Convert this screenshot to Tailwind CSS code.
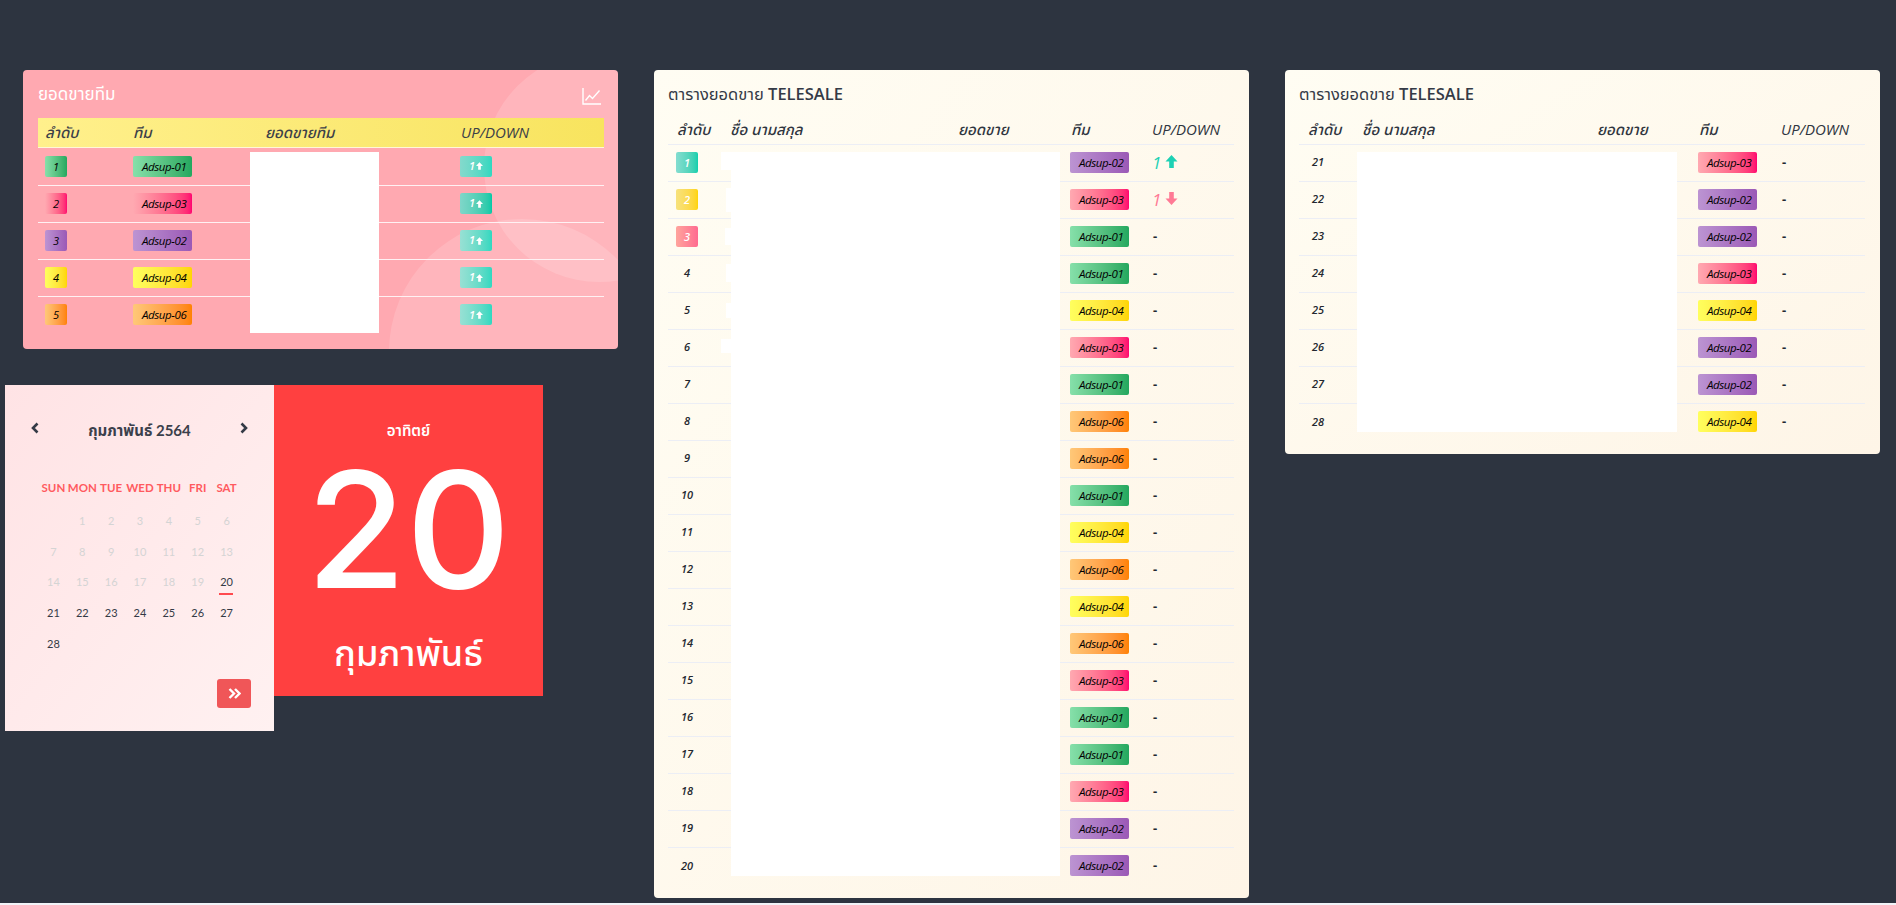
<!DOCTYPE html>
<html lang="en">

<head>
    <meta charset="UTF-8">
    <meta name="viewport" content="width=device-width, initial-scale=1.0">
    <title>Adsup Dashboard</title>
    <script src="https://cdn.jsdelivr.net/npm/@tailwindcss/browser@4"></script>
</head>

<body class="bg-[#f1f3f8] font-['Open_Sans','Noto_Sans','Noto_Sans_Thai',sans-serif] overflow-hidden">

    <div class="h-[903px] bg-[#2d3440] pt-[70px] flex items-start overflow-hidden">

        <!-- Left column -->
        <div class="w-[618px] shrink-0">

            <!-- Team sales -->
            <div class="relative overflow-hidden ml-[23px] w-[595px] h-[279px] rounded-[4px] bg-[#ffa9b1] px-[15px]">
                <div class="absolute left-[461px] top-[-18px] w-[230px] h-[230px] rounded-full bg-white/15"></div>
                <div class="absolute left-[366px] top-[149px] w-[266px] h-[266px] rounded-full bg-white/15"></div>
                <div class="relative flex justify-between items-center h-[48px] pr-[2px]">
                    <h2 class="text-[17px] text-white">ยอดขายทีม</h2>
                    <svg class="w-[19px] h-[17px] mt-[4px]" viewBox="0 0 19 17" fill="none" stroke="white" stroke-width="1.4">
                        <path d="M1 0v16h18" />
                        <path d="M3.5 12.5l4-5 3 3 7-8" />
                    </svg>
                </div>
                <table class="relative table-fixed w-[566px]">
                    <colgroup>
                        <col class="w-[88px]"><col class="w-[133px]"><col class="w-[194px]"><col class="w-[151px]">
                    </colgroup>
                    <thead>
                        <tr class="h-[29px] bg-gradient-to-r from-[#fff08c] to-[#f8e45e] border-b border-[#fff7d8] text-[15px] italic text-[#3c4048] text-left">
                            <th class="font-medium pl-[7px]">ลำดับ</th>
                            <th class="font-medium pl-[7px]">ทีม</th>
                            <th class="font-medium pl-[6px]">ยอดขายทีม</th>
                            <th class="font-medium pl-[8px]">UP/DOWN</th>
                        </tr>
                    </thead>
                    <tbody id="teamRows"></tbody>
                </table>
                <div class="absolute left-[227px] top-[82px] w-[129px] h-[181px] bg-white"></div>
            </div>

            <!-- Calendar -->
            <div class="flex items-start ml-[5px] mt-[36px]">
                <div class="w-[269px] h-[346px] bg-gradient-to-br from-[#ffe3e5] to-[#fff1f1] pt-[36px]">
                    <div class="flex items-center justify-between h-[18px] pl-[26px] pr-[26px]">
                        <svg class="w-[8px] h-[12px] -mt-[4px]" viewBox="0 0 8 12" fill="none" stroke="#343a46" stroke-width="2.6"><path d="M6.5 1.5L2 6l4.5 4.5" /></svg>
                        <span class="font-['Lato','Noto_Sans_Thai',sans-serif] text-[15px] font-bold text-[#3b404b]">กุมภาพันธ์ 2564</span>
                        <svg class="w-[8px] h-[12px] -mt-[4px]" viewBox="0 0 8 12" fill="none" stroke="#343a46" stroke-width="2.6"><path d="M1.5 1.5L6 6l-4.5 4.5" /></svg>
                    </div>
                    <div class="grid grid-cols-7 w-[202px] ml-[34px] mt-[40px] h-[16px] items-center text-center font-['Lato',sans-serif] text-[11.5px] font-bold text-[#ff5a5f]">
                        <span>SUN</span><span>MON</span><span>TUE</span><span>WED</span><span>THU</span><span>FRI</span><span>SAT</span>
                    </div>
                    <div id="days" class="grid grid-cols-7 auto-rows-[30.7px] w-[202px] ml-[34px] mt-[11px] items-center text-center font-['Lato',sans-serif] text-[11px]"></div>
                    <div class="flex justify-end mt-[20px] mr-[23px]">
                        <button class="w-[34px] h-[29px] rounded-[3px] bg-[#f05658] flex items-center justify-center">
                            <svg class="w-[13px] h-[11px]" viewBox="0 0 13 11" fill="none" stroke="white" stroke-width="2.4"><path d="M1.5 1l4.5 4.5L1.5 10" /><path d="M7 1l4.5 4.5L7 10" /></svg>
                        </button>
                    </div>
                </div>
                <div class="w-[269px] h-[311px] bg-[#ff4040] pt-[36px] flex flex-col items-center text-white">
                    <div class="h-[18px] leading-[18px] text-[15px] font-semibold">อาทิตย์</div>
                    <div class="mt-[10px] h-[160px] leading-[160px] text-[162px] font-medium font-['Inter',sans-serif]">20</div>
                    <div class="mt-[24px] h-[40px] leading-[40px] text-[36px] font-medium">กุมภาพันธ์</div>
                </div>
            </div>
        </div>

        <!-- Telesale ranking 1-20 -->
        <div class="relative shrink-0 ml-[36px] w-[595px] rounded-[4px] bg-gradient-to-br from-[#fffdf3] to-[#fef5e7] pt-[15px] px-[14px] pb-[14px]">
            <h2 class="h-[20px] leading-[18px] text-[16.5px] text-[#343a46]">ตารางยอดขาย <span class="font-semibold">TELESALE</span></h2>
            <table class="table-fixed w-[566px] mt-[9px]">
                <colgroup>
                    <col class="w-[55px]"><col class="w-[229px]"><col class="w-[110px]"><col class="w-[82px]"><col class="w-[90px]">
                </colgroup>
                <thead>
                    <tr class="h-[30px] text-[15px] italic text-[#2f3540] text-left">
                        <th class="font-medium pl-[9px]">ลำดับ</th>
                        <th class="font-medium pl-[7px]">ชื่อ นามสกุล</th>
                        <th class="font-medium pl-[6px]">ยอดขาย</th>
                        <th class="font-medium pl-[9px]">ทีม</th>
                        <th class="font-medium pl-[8px]">UP/DOWN</th>
                    </tr>
                </thead>
                <tbody id="saleRowsA"></tbody>
            </table>
            <!-- blanked out names -->
            <div class="absolute left-[77px] top-[82px] w-[329px] h-[724px] bg-white"></div>
            <div class="absolute left-[67px] top-[82px] w-[10px] h-[18px] bg-white"></div>
            <div class="absolute left-[72px] top-[118px] w-[5px] h-[24px] bg-white"></div>
            <div class="absolute left-[71px] top-[158px] w-[6px] h-[17px] bg-white"></div>
            <div class="absolute left-[72px] top-[194px] w-[5px] h-[18px] bg-white"></div>
            <div class="absolute left-[72px] top-[233px] w-[5px] h-[15px] bg-white"></div>
            <div class="absolute left-[67px] top-[269px] w-[10px] h-[14px] bg-white"></div>
        </div>

        <!-- Telesale ranking 21-28 -->
        <div class="relative shrink-0 ml-[36px] w-[595px] rounded-[4px] bg-gradient-to-br from-[#fffdf3] to-[#fef5e7] pt-[15px] px-[14px] pb-[14px]">
            <h2 class="h-[20px] leading-[18px] text-[16.5px] text-[#343a46]">ตารางยอดขาย <span class="font-semibold">TELESALE</span></h2>
            <table class="table-fixed w-[566px] mt-[9px]">
                <colgroup>
                    <col class="w-[56px]"><col class="w-[235px]"><col class="w-[100px]"><col class="w-[83px]"><col class="w-[92px]">
                </colgroup>
                <thead>
                    <tr class="h-[30px] text-[15px] italic text-[#2f3540] text-left">
                        <th class="font-medium pl-[9px]">ลำดับ</th>
                        <th class="font-medium pl-[7px]">ชื่อ นามสกุล</th>
                        <th class="font-medium pl-[7px]">ยอดขาย</th>
                        <th class="font-medium pl-[9px]">ทีม</th>
                        <th class="font-medium pl-[8px]">UP/DOWN</th>
                    </tr>
                </thead>
                <tbody id="saleRowsB"></tbody>
            </table>
            <div class="absolute left-[72px] top-[82px] w-[320px] h-[280px] bg-white"></div>
        </div>
    </div>

    <script>
        const teamBadge = {
            '01': 'from-[#86e0aa] to-[#22a85f]',
            '02': 'from-[#bc94d2] to-[#9b59b6]',
            '03': 'from-[#ffa9b1] to-[#ff0070]',
            '04': 'from-[#ffff5e] to-[#ffd600]',
            '06': 'from-[#ffc878] to-[#ff8200]'
        };
        const topBadge = {
            1: 'from-[#84ddd0] to-[#0ccfae]',
            2: 'from-[#f7e27c] to-[#ffd400]',
            3: 'from-[#ffa49c] to-[#ff6a90]'
        };
        const arrowUp = '<svg class="w-[13px] h-[13px] ml-[4px] -mt-[2px]" viewBox="0 0 12 13" fill="#1dd1b4"><path d="M6 0l6 6.5H8.3V13H3.7V6.5H0z"/></svg>';
        const arrowDown = '<svg class="w-[13px] h-[13px] ml-[4px] -mt-[2px]" viewBox="0 0 12 13" fill="#ff7a95"><path d="M6 13L0 6.5h3.7V0h4.6v6.5H12z"/></svg>';

        function badge(team) {
            return `<span class="block w-[59px] h-[21px] leading-[21px] rounded-[2px] pl-[9px] text-[11.5px] italic font-medium tracking-[-0.4px] text-black bg-gradient-to-r ${teamBadge[team]}">Adsup-${team}</span>`;
        }

        function saleRow(rank, team) {
            let rankCell = `<span class="block w-[22px] text-center text-[11px] italic font-semibold text-[#23272f]">${rank}</span>`;
            if (topBadge[rank]) {
                rankCell = `<span class="block w-[22px] h-[21px] leading-[21px] rounded-[2px] text-center text-[11px] italic font-semibold text-white bg-gradient-to-r ${topBadge[rank]}">${rank}</span>`;
            }
            let move = '<span class="font-bold text-[#23272f] pl-[1px]">-</span>';
            if (rank === 1) move = `<span class="flex items-center"><span class="italic text-[17px] leading-[20px] text-[#1dd1b4]">1</span>${arrowUp}</span>`;
            if (rank === 2) move = `<span class="flex items-center"><span class="italic text-[17px] leading-[20px] text-[#ff7a95]">1</span>${arrowDown}</span>`;
            return `<tr class="h-[37px] border-t border-[#eceef5]">
                <td class="pl-[8px]">${rankCell}</td><td></td><td></td>
                <td class="pl-[8px]">${badge(team)}</td>
                <td class="pl-[8px] text-[13px]">${move}</td>
            </tr>`;
        }

        const teamsA = ['02','03','01','01','04','03','01','06','06','01','04','06','04','06','03','01','01','03','02','02'];
        const teamsB = ['03','02','02','03','04','02','02','04'];
        document.getElementById('saleRowsA').innerHTML = teamsA.map((t, i) => saleRow(i + 1, t)).join('');
        document.getElementById('saleRowsB').innerHTML = teamsB.map((t, i) => saleRow(i + 21, t)).join('');

        const ranking = ['01', '03', '02', '04', '06'];
        const upBadge = ['from-[#84d9cc] to-[#2fd8c0]', 'from-[#7fd6c9] to-[#00c9a7]', 'from-[#98e0d4] to-[#2fd8c0]', 'from-[#98e0d4] to-[#2fd8c0]', 'from-[#98e0d4] to-[#2fd8c0]'];
        document.getElementById('teamRows').innerHTML = ranking.map((t, i) => `<tr class="h-[37px] first:h-[38px] border-t border-[#fff1f3] first:border-t-0">
            <td class="pl-[7px]"><span class="block w-[22px] h-[21px] leading-[21px] rounded-[2px] text-center text-[11px] italic font-medium text-black bg-gradient-to-r ${teamBadge[t]}">${i + 1}</span></td>
            <td class="pl-[7px]">${badge(t)}</td>
            <td></td>
            <td class="pl-[7px]"><span class="flex items-center justify-center w-[32px] h-[21px] rounded-[2px] text-[11px] italic font-semibold text-white bg-gradient-to-r ${upBadge[i]}">1<svg class="w-[7px] h-[8px] ml-[1px]" viewBox="0 0 12 13" fill="white"><path d="M6 0l6 6.5H8.3V13H3.7V6.5H0z"/></svg></span></td>
        </tr>`).join('');

        let dayCells = '<span></span>';
        for (let d = 1; d <= 28; d++) {
            if (d < 20) dayCells += `<span class="text-[#d4d4d4]">${d}</span>`;
            else if (d === 20) dayCells += `<span class="relative text-[#343a46]">${d}<i class="absolute left-[7px] top-[19px] w-[14px] h-[2px] bg-[#ff4a4f]"></i></span>`;
            else dayCells += `<span class="text-[#343a46]">${d}</span>`;
        }
        document.getElementById('days').innerHTML = dayCells;
    </script>

</body>

</html>
